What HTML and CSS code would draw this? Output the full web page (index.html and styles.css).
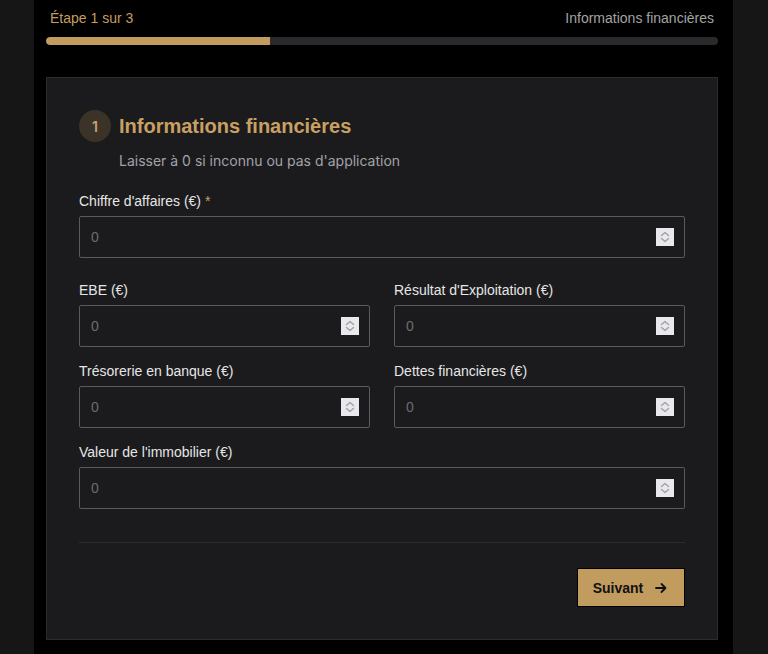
FILE: index.html
```html
<!DOCTYPE html>
<html lang="fr">
<head>
<meta charset="utf-8">
<title>Informations financières</title>
<link rel="stylesheet" href="styles.css">
</head>
<body>
<div class="column">
  <div class="progress-head">
    <span class="step">Étape 1 sur 3</span>
    <span class="step-name">Informations financières</span>
  </div>
  <div class="progress-track"><div class="progress-fill" style="width:33.33%"></div></div>

  <form class="card">
    <div class="card-title">
      <span class="badge">1</span>
      <h2>Informations financières</h2>
    </div>
    <p class="hint">Laisser à 0 si inconnu ou pas d'application</p>

    <div class="field field-first">
      <label>Chiffre d'affaires (€) <span class="req">*</span></label>
      <div class="input-wrap"><input type="number" placeholder="0"><span class="spin"><svg viewBox="0 0 18 18" width="18" height="18"><path d="M5.5 7.5 L9 4.5 L12.5 7.5" /><path d="M5.5 10.5 L9 13.5 L12.5 10.5" /></svg></span></div>
    </div>

    <div class="grid">
      <div class="field">
        <label>EBE (€)</label>
        <div class="input-wrap"><input type="number" placeholder="0"><span class="spin"><svg viewBox="0 0 18 18" width="18" height="18"><path d="M5.5 7.5 L9 4.5 L12.5 7.5" /><path d="M5.5 10.5 L9 13.5 L12.5 10.5" /></svg></span></div>
      </div>
      <div class="field">
        <label>Résultat d'Exploitation (€)</label>
        <div class="input-wrap"><input type="number" placeholder="0"><span class="spin"><svg viewBox="0 0 18 18" width="18" height="18"><path d="M5.5 7.5 L9 4.5 L12.5 7.5" /><path d="M5.5 10.5 L9 13.5 L12.5 10.5" /></svg></span></div>
      </div>
      <div class="field">
        <label>Trésorerie en banque (€)</label>
        <div class="input-wrap"><input type="number" placeholder="0"><span class="spin"><svg viewBox="0 0 18 18" width="18" height="18"><path d="M5.5 7.5 L9 4.5 L12.5 7.5" /><path d="M5.5 10.5 L9 13.5 L12.5 10.5" /></svg></span></div>
      </div>
      <div class="field">
        <label>Dettes financières (€)</label>
        <div class="input-wrap"><input type="number" placeholder="0"><span class="spin"><svg viewBox="0 0 18 18" width="18" height="18"><path d="M5.5 7.5 L9 4.5 L12.5 7.5" /><path d="M5.5 10.5 L9 13.5 L12.5 10.5" /></svg></span></div>
      </div>
    </div>

    <div class="field field-last">
      <label>Valeur de l'immobilier (€)</label>
      <div class="input-wrap"><input type="number" placeholder="0"><span class="spin"><svg viewBox="0 0 18 18" width="18" height="18"><path d="M5.5 7.5 L9 4.5 L12.5 7.5" /><path d="M5.5 10.5 L9 13.5 L12.5 10.5" /></svg></span></div>
    </div>

    <div class="actions">
      <button type="button" class="next">Suivant
        <svg viewBox="0 0 16 16" width="16" height="16"><path d="M3 8 H12.5 M8.5 4 L12.5 8 L8.5 12" /></svg>
      </button>
    </div>
  </form>
</div>
</body>
</html>
```

FILE: styles.css
```css
* { box-sizing: border-box; }

html, body {
  margin: 0;
  padding: 0;
  background: #161616;
  height: 100%;
}

body {
  font-family: "Liberation Sans", Arial, sans-serif;
  font-size: 14px;
  color: #e5e5e5;
  overflow: hidden;
}

.column {
  margin-left: 34px;
  width: 699px;
  min-height: 654px;
  background: #000000;
  padding: 8px 15px 0 12px;
}

.progress-head {
  display: flex;
  justify-content: space-between;
  align-items: center;
  height: 20px;
  padding: 0 4px;
  line-height: 20px;
}

.step { color: #c59d62; }
.step-name { color: #a3a3a3; }

.progress-track {
  margin-top: 9px;
  height: 8px;
  border-radius: 4px;
  background: #2a2a2c;
  overflow: hidden;
}

.progress-fill {
  height: 100%;
  background: #c29b5e;
  border-radius: 4px 0 0 4px;
}

.card {
  margin-top: 32px;
  background: #1b1b1d;
  border: 1px solid #2c2c2e;
  padding: 32px 32px 32px 32px;
}

.card-title {
  display: flex;
  align-items: center;
  gap: 8px;
  height: 32px;
}

.badge {
  width: 32px;
  height: 32px;
  border-radius: 50%;
  background: #3b3328;
  color: #c7a571;
  display: flex;
  align-items: center;
  justify-content: center;
  font-size: 14px;
  font-weight: 600;
  font-family: Inter, "Liberation Sans", sans-serif;
}

.card-title h2 {
  margin: 0;
  font-size: 20px;
  font-weight: bold;
  color: #c9a063;
  line-height: 28px;
}

.hint {
  margin: 9px 0 0 40px;
  line-height: 20px;
  color: #a2a2a8;
  font-family: Inter, "Liberation Sans", sans-serif;
  font-size: 14px;
}

.field label {
  display: block;
  line-height: 20px;
  margin-bottom: 5px;
  color: #e6e6e6;
}

.req { color: #c9a063; }

.field-first { margin-top: 20px; margin-bottom: 22px; }

.grid {
  display: grid;
  grid-template-columns: 1fr 1fr;
  column-gap: 24px;
  row-gap: 14px;
}

.field-last { margin-top: 14px; }

.input-wrap {
  position: relative;
}

.input-wrap input {
  display: block;
  width: 100%;
  height: 42px;
  background: #1b1b1d;
  border: 1px solid #5a5a5c;
  border-radius: 2px;
  padding: 0 40px 0 11px;
  color: #e6e6e6;
  font-family: "Liberation Sans", Arial, sans-serif;
  font-size: 14px;
  outline: none;
  -moz-appearance: textfield;
}

.input-wrap input::placeholder { color: #6c6c6e; }

.input-wrap input::-webkit-inner-spin-button,
.input-wrap input::-webkit-outer-spin-button {
  -webkit-appearance: none;
  margin: 0;
}

.spin {
  position: absolute;
  right: 11px;
  top: 12px;
  width: 18px;
  height: 18px;
  background: #e9e9ed;
  display: block;
}

.spin svg {
  display: block;
  fill: none;
  stroke: #a0a0a6;
  stroke-width: 1.4;
  stroke-linecap: round;
  stroke-linejoin: round;
}

.actions {
  margin-top: 33px;
  border-top: 1px solid #2c2c2e;
  padding-top: 25px;
  display: flex;
  justify-content: flex-end;
}

.next {
  width: 108px;
  height: 39px;
  background: #c29b5e;
  border: 1px solid #000000;
  color: #111111;
  font-family: "Liberation Sans", Arial, sans-serif;
  font-size: 14px;
  font-weight: bold;
  display: flex;
  align-items: center;
  justify-content: center;
  gap: 10px;
  padding: 0;
  cursor: pointer;
}

.next svg {
  fill: none;
  stroke: #111111;
  stroke-width: 1.8;
  stroke-linecap: round;
  stroke-linejoin: round;
}
```
